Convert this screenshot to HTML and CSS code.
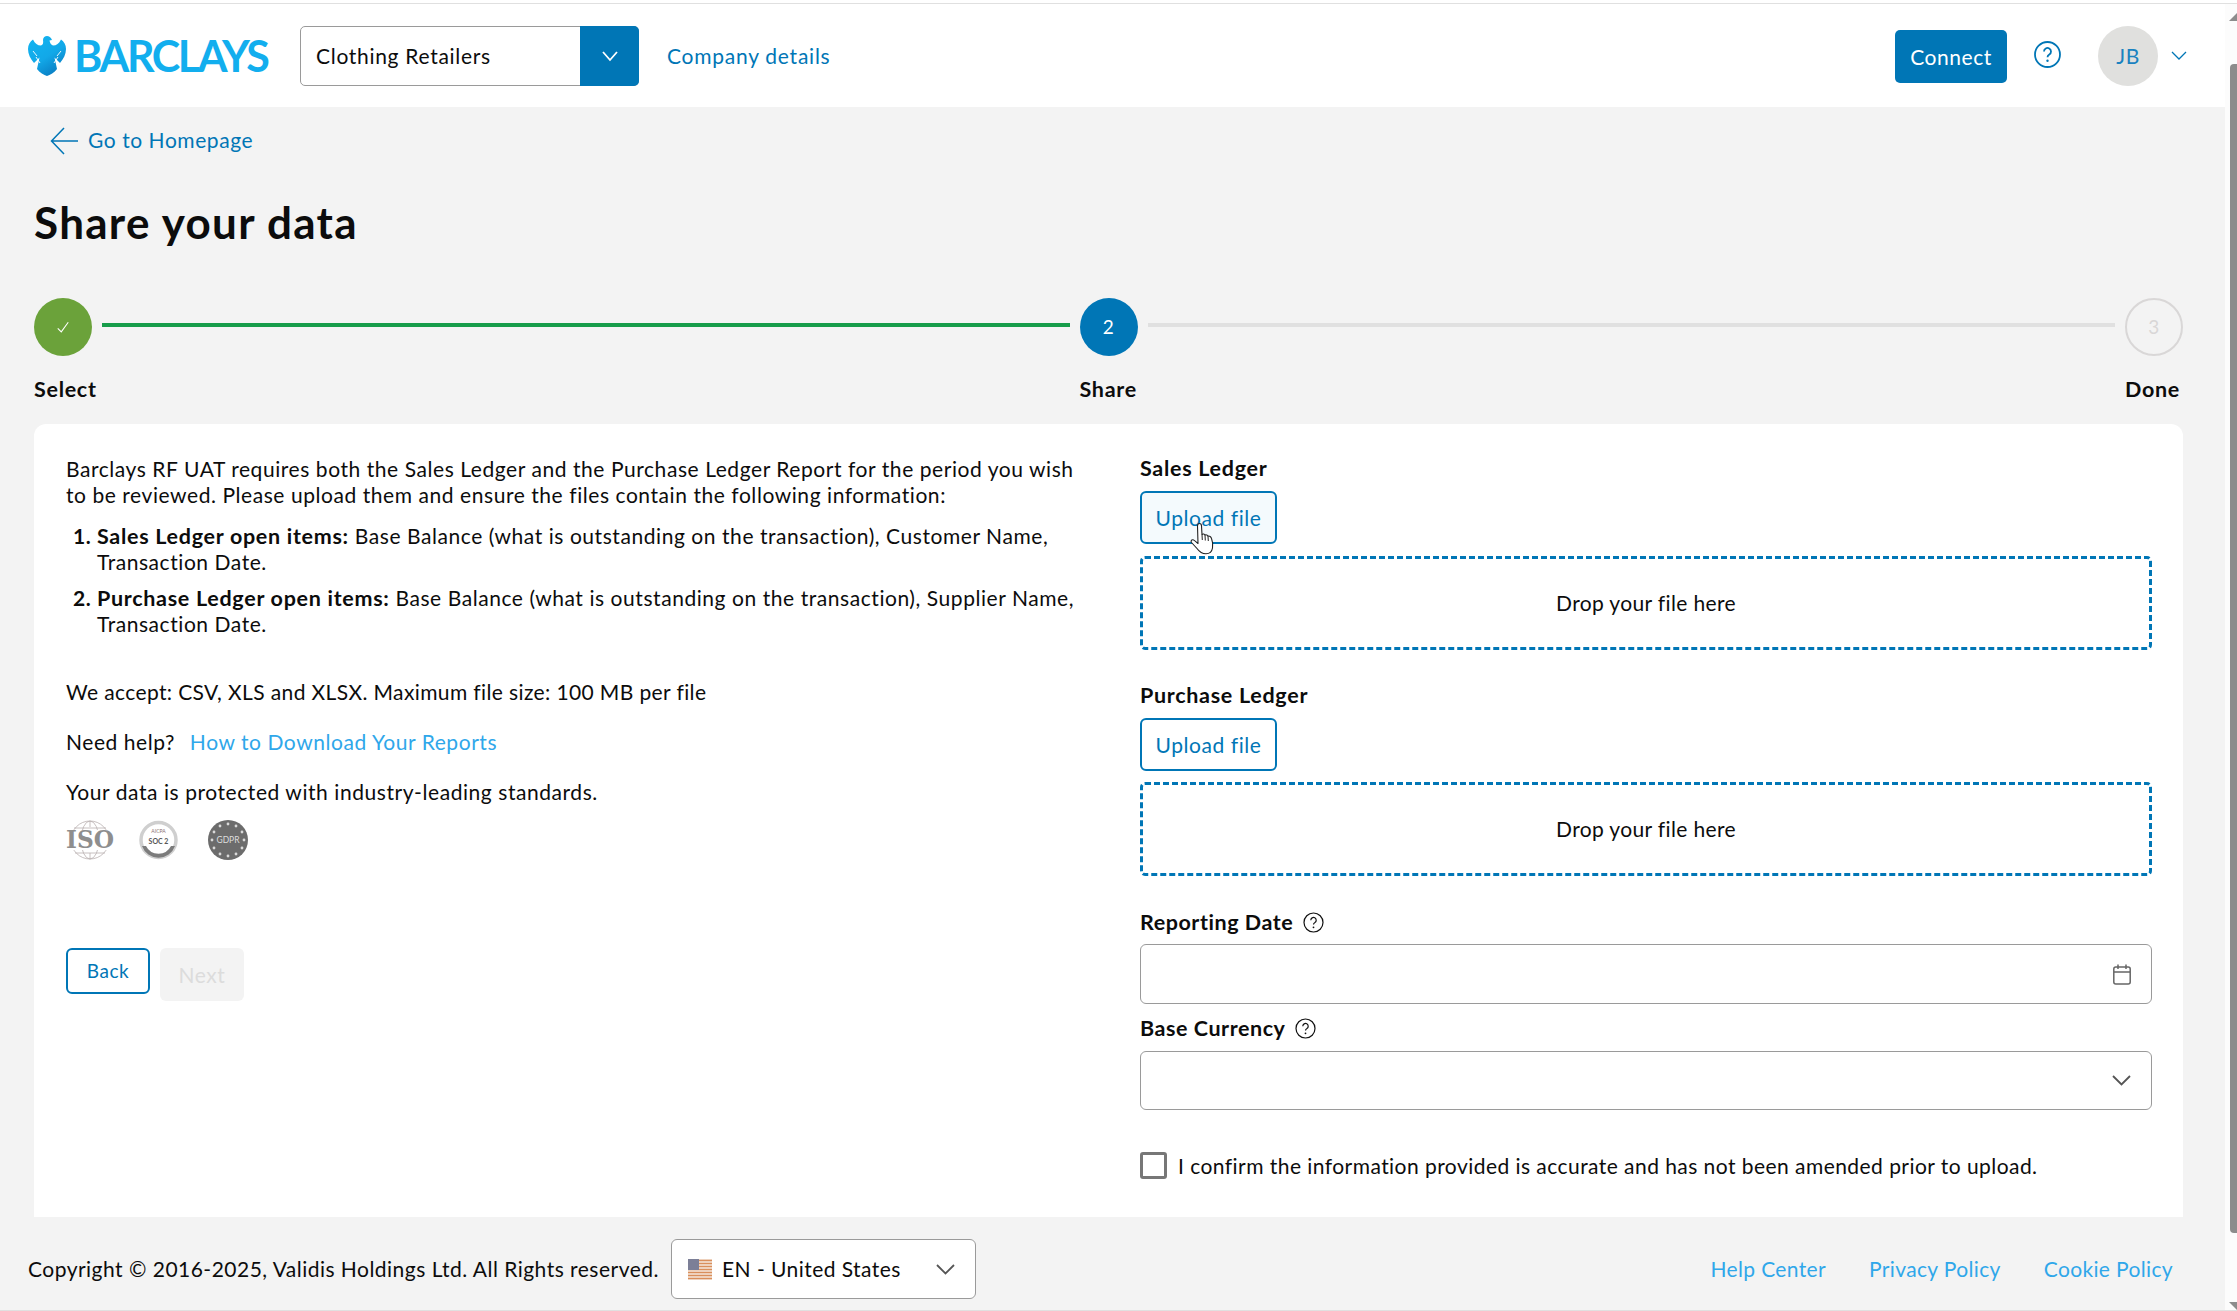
FILE: index.html
```html
<!DOCTYPE html>
<html lang="en">
<head>
<meta charset="utf-8">
<title>Share your data</title>
<link rel="stylesheet" href="styles.css">
</head>
<body>
<div class="shell">
  <div class="top-strip"></div>
  <div class="frame">
    <div class="app">
      <header class="header">
        <div class="logo">
          <svg class="eagle" viewBox="0 0 38 40" aria-hidden="true">
            <defs>
              <linearGradient id="eg" x1="0" y1="0" x2="0.6" y2="1">
                <stop offset="0" stop-color="#12b5f2"/>
                <stop offset="0.6" stop-color="#12a8e8"/>
                <stop offset="1" stop-color="#0a7fc4"/>
              </linearGradient>
            </defs>
            <path fill="url(#eg)" d="M19 0C21 0 23 1.500 24 4L21.500 4.500C22 7 23 9 25 9.500C28.500 9.500 31 7.500 33 3.500C36 5.500 38 9 38 13C38 18 35.500 23 32 27L26.500 21.500L29 33C26.500 36.500 22 39 19 40C16 39 11.500 36.500 9 33L11.500 21.500L6 27C2.500 23 0 18 0 13C0 9 2 5.500 5 3.500C7 7.500 9.500 9.500 13 9.500C15 9 15.500 7 15 4C15 1.500 17 0 19 0Z"/>
            <path fill="none" stroke="#fff" stroke-width="0.900" d="M8 21L12 27M30 21L26 27M5 15L9 20M33 15L29 20"/>
          </svg>
          <span class="wordmark">BARCLAYS</span>
        </div>
        <div class="company-select">
          <span class="company-name">Clothing Retailers</span>
          <span class="company-btn">
            <svg width="18" height="12" viewBox="0 0 18 12"><path d="M2 2l7 8 7-8" fill="none" stroke="#fff" stroke-width="1.800"/></svg>
          </span>
        </div>
        <a class="company-link">Company details</a>
        <div class="header-right">
          <button class="connect">Connect</button>
          <svg class="help" viewBox="0 0 27 27" aria-hidden="true">
            <circle cx="13.500" cy="13.500" r="12.500" fill="none" stroke="#0076b6" stroke-width="1.800"/>
            <path d="M10 10.500a3.500 3.500 0 1 1 5.300 3c-1.200.7-1.800 1.200-1.800 2.800" fill="none" stroke="#0076b6" stroke-width="1.800"/>
            <circle cx="13.500" cy="19.800" r="1.200" fill="#0076b6"/>
          </svg>
          <span class="avatar">JB</span>
          <svg class="avatar-chev" viewBox="0 0 16 9"><path d="M1 1l7 7 7-7" fill="none" stroke="#0076b6" stroke-width="1.300"/></svg>
        </div>
      </header>

      <main class="page">
        <a class="back-link">
          <svg width="28" height="28" viewBox="0 0 28 28"><path d="M14 1L1.500 14 14 27M1.500 14H28" fill="none" stroke="#0076b6" stroke-width="1.500"/></svg>
          <span class="back-text">Go to Homepage</span>
        </a>
        <h1 class="title">Share your data</h1>

        <div class="stepper">
          <div class="step">
            <span class="dot dot-done">
              <svg width="14" height="13" viewBox="0 0 16 14"><path d="M2 8l4 4 8-11" fill="none" stroke="#fff" stroke-width="1.200"/></svg>
            </span>
            <span class="step-label">Select</span>
          </div>
          <span class="connector connector-done"></span>
          <div class="step">
            <span class="dot dot-active">2</span>
            <span class="step-label">Share</span>
          </div>
          <span class="connector"></span>
          <div class="step">
            <span class="dot dot-todo">3</span>
            <span class="step-label">Done</span>
          </div>
        </div>

        <section class="card">
          <div class="left">
            <p>Barclays RF UAT requires both the Sales Ledger and the Purchase Ledger Report for the period you wish to be reviewed. Please upload them and ensure the files contain the following information:</p>
            <ol class="req-list">
              <li><b>Sales Ledger open items:</b> Base Balance (what is outstanding on the transaction), Customer Name, Transaction Date.</li>
              <li><b>Purchase Ledger open items:</b> Base Balance (what is outstanding on the transaction), Supplier Name, Transaction Date.</li>
            </ol>
            <p class="accept">We accept: CSV, XLS and XLSX. Maximum file size: 100 MB per file</p>
            <p class="gap">Need help? <a class="ext-link">How to Download Your Reports</a></p>
            <p class="gap">Your data is protected with industry-leading standards.</p>
            <div class="badges">
              <svg class="badge-iso" viewBox="0 0 48 40" aria-hidden="true">
                <g fill="none" stroke="#b9b0b0" stroke-width="0.800">
                  <circle cx="24" cy="20" r="19"/>
                  <ellipse cx="24" cy="20" rx="9" ry="19"/>
                  <path d="M8 8h32M5 13h38M5 28h38M9 33h30M24 1v6M24 33v6"/>
                </g>
                <rect x="0" y="10" width="48" height="20" fill="#fff"/>
                <text x="0" y="28" textLength="48" lengthAdjust="spacingAndGlyphs" class="iso-text">ISO</text>
              </svg>
              <svg class="badge-soc" viewBox="0 0 39 40" aria-hidden="true">
                <circle cx="19.500" cy="20" r="17.500" fill="#fff" stroke="#cfcfcf" stroke-width="3.500"/>
                <path d="M3 26a17.500 17.500 0 0 0 33 0l-4 0a14 14 0 0 1-25 0z" fill="#7c7c7c"/>
                <text x="19.500" y="13" text-anchor="middle" class="soc-small">AICPA</text>
                <text x="19.500" y="24" text-anchor="middle" class="soc-big">SOC 2</text>
              </svg>
              <svg class="badge-gdpr" viewBox="0 0 40 40" aria-hidden="true">
                <circle cx="20" cy="20" r="20" fill="#6c6c6c"/>
                <g fill="#d9d9d9">
                  <circle cx="20" cy="4" r="1.400"/><circle cx="28" cy="6" r="1.400"/><circle cx="34" cy="12" r="1.400"/><circle cx="36" cy="20" r="1.400"/><circle cx="34" cy="28" r="1.400"/><circle cx="28" cy="34" r="1.400"/><circle cx="20" cy="36" r="1.400"/><circle cx="12" cy="34" r="1.400"/><circle cx="6" cy="28" r="1.400"/><circle cx="4" cy="20" r="1.400"/><circle cx="6" cy="12" r="1.400"/><circle cx="12" cy="6" r="1.400"/>
                </g>
                <text x="20" y="23" text-anchor="middle" class="gdpr-text">GDPR</text>
              </svg>
            </div>
            <div class="nav-buttons">
              <button class="btn-back">Back</button>
              <button class="btn-next" disabled>Next</button>
            </div>
          </div>

          <div class="right">
            <label class="field-label">Sales Ledger</label>
            <div class="upload-row">
              <button class="upload upload-hover">Upload file</button>
              <svg class="hand" viewBox="0 0 25 33" aria-hidden="true">
                <path d="M9.500 1.500C11 1.500 11.500 2.500 11.500 4L12 12.500C13 11.500 14.500 12 15 13C16 12.500 17.500 13 18 14.200C19.500 13.700 21 14.800 21.500 16.500C22.500 19 23 23 22.500 26C22 29 20 31.800 16 31.800C12 31.800 9.500 30 7 26.500L1.500 20.500C0.500 19 1.500 17.500 3 17.800C4.500 18.200 6 20 8 21.500L7.500 4C7.500 2.500 8.300 1.500 9.500 1.500Z" fill="#fff" stroke="#222" stroke-width="1.100" stroke-linejoin="round"/>
                <path d="M12 12.500L12.300 18M15 13L15.300 18.500M18 14.200L18.300 19" fill="none" stroke="#222" stroke-width="1"/>
              </svg>
            </div>
            <div class="dropzone">Drop your file here</div>

            <label class="field-label field-label-next">Purchase Ledger</label>
            <div class="upload-row">
              <button class="upload">Upload file</button>
            </div>
            <div class="dropzone dropzone-second">Drop your file here</div>

            <label class="field-label field-label-date">Reporting Date
              <svg class="hint" viewBox="0 0 21 21" aria-hidden="true"><circle cx="10.500" cy="10.500" r="9.500" fill="none" stroke="#111" stroke-width="1.200"/><path d="M7.800 8.200a2.700 2.700 0 1 1 4.100 2.300c-.9.500-1.400 1-1.400 2.100" fill="none" stroke="#111" stroke-width="1.200"/><circle cx="10.500" cy="15.300" r="0.900" fill="#111"/></svg>
            </label>
            <div class="input">
              <svg class="cal" viewBox="0 0 18 21" aria-hidden="true"><rect x="0.800" y="3" width="16.400" height="17" rx="2" fill="none" stroke="#666" stroke-width="1.500"/><path d="M1 8h16M5 0.500v4.500M13 0.500v4.500" fill="none" stroke="#666" stroke-width="1.500"/></svg>
            </div>
            <label class="field-label field-label-currency">Base Currency
              <svg class="hint" viewBox="0 0 21 21" aria-hidden="true"><circle cx="10.500" cy="10.500" r="9.500" fill="none" stroke="#111" stroke-width="1.200"/><path d="M7.800 8.200a2.700 2.700 0 1 1 4.100 2.300c-.9.500-1.400 1-1.400 2.100" fill="none" stroke="#111" stroke-width="1.200"/><circle cx="10.500" cy="15.300" r="0.900" fill="#111"/></svg>
            </label>
            <div class="input input-select">
              <svg class="chev" viewBox="0 0 19 11" aria-hidden="true"><path d="M1 1l8.500 8.500L18 1" fill="none" stroke="#555" stroke-width="1.800"/></svg>
            </div>
            <div class="confirm">
              <span class="checkbox"></span>
              <span>I confirm the information provided is accurate and has not been amended prior to upload.</span>
            </div>
          </div>
        </section>

        <footer class="footer">
          <span class="copyright">Copyright © 2016-2025, Validis Holdings Ltd. All Rights reserved.</span>
          <div class="locale">
            <svg class="flag" viewBox="0 0 24 21" aria-hidden="true">
              <rect width="24" height="21" fill="#f4e7dc"/>
              <path d="M0 1.500h24M0 4.500h24M0 7.500h24M0 10.500h24M0 13.500h24M0 16.500h24M0 19.500h24" stroke="#d98f5c" stroke-width="1.500"/>
              <rect width="11" height="11" fill="#7c7f97"/>
            </svg>
            <span class="locale-text">EN - United States</span>
            <svg class="locale-chev" viewBox="0 0 19 11" aria-hidden="true"><path d="M1 1l8.500 8.500L18 1" fill="none" stroke="#555" stroke-width="1.800"/></svg>
          </div>
          <nav class="footer-links">
            <a>Help Center</a>
            <a>Privacy Policy</a>
            <a>Cookie Policy</a>
          </nav>
        </footer>
      </main>
    </div>
    <aside class="scrollbar">
      <span class="arrow-up"></span>
      <span class="thumb"></span>
      <span class="arrow-down"></span>
    </aside>
  </div>
  <div class="bottom-line"></div>
</div>
</body>
</html>
```
FILE: styles.css
```css
* { box-sizing: border-box; }
html, body { margin: 0; height: 100%; overflow: hidden; }
body {
  font-family: "Lato", "Open Sans", sans-serif;
  font-size: 21px;
  letter-spacing: 0.56px;
  line-height: 26px;
  color: #0c0c0c;
  background: #fff;
}
p { margin: 0; }
b { font-size: 21.500px; letter-spacing: 0.7px; }
button { font: inherit; letter-spacing: inherit; cursor: pointer; }
a { cursor: pointer; }

.shell { display: flex; flex-direction: column; height: 1311px; }
.top-strip { height: 4px; flex: none; background: #fff; border-bottom: 1px solid #e0e0e0; }
.frame { flex: 1; display: flex; min-height: 0; }
.bottom-line { height: 1px; flex: none; background: #e0e0e0; }
.app { flex: 1; display: flex; flex-direction: column; background: #f3f3f3; min-width: 0; }

.scrollbar { width: 12px; flex: none; background: #fcfcfc; display: flex; flex-direction: column; align-items: flex-end; }
.arrow-up { width: 8px; height: 8px; margin-top: 9px; background: #8c8c8c; clip-path: polygon(100% 0, 100% 100%, 0 100%); }
.thumb { width: 7px; height: 1169px; margin-top: 43px; background: #8c8c8c; border-radius: 4px 0 0 4px; }
.arrow-down { width: 8px; height: 8px; margin-top: auto; background: #8c8c8c; clip-path: polygon(0 0, 100% 0, 100% 100%); }

.header { height: 103px; flex: none; background: #fff; display: flex; align-items: center; padding: 0 38px 0 28px; }
.logo { display: flex; align-items: center; gap: 8px; width: 272px; flex: none; }
.eagle { width: 38px; height: 40px; flex: none; }
.wordmark { font-family: "Lato", sans-serif; font-size: 43px; font-weight: 700; letter-spacing: -2.400px; color: #12aeee; line-height: 40px; }
.company-select { display: flex; width: 339px; height: 60px; flex: none; border: 1px solid #9a9a9a; border-radius: 5px; background: #fff; }
.company-name { flex: 1; align-self: center; padding-left: 15px; letter-spacing: 0.7px; }
.company-btn { width: 59px; margin: -1px -1px -1px 0; background: #0076b6; border-radius: 0 5px 5px 0; display: flex; align-items: center; justify-content: center; }
.company-link { margin-left: 28px; color: #0076b6; letter-spacing: 0.75px; }
.header-right { margin-left: auto; display: flex; align-items: center; }
.connect { width: 112px; height: 53px; margin-top: 2px; background: #0076b6; color: #fff; border: 0; border-radius: 5px; padding: 0; }
.help { width: 27px; height: 27px; margin: -2px 0 0 27px; }
.avatar { width: 60px; height: 60px; margin-left: 37px; border-radius: 50%; background: #e0e0de; color: #1a82c0; display: flex; align-items: center; justify-content: center; }
.avatar-chev { width: 16px; height: 9px; margin-left: 13px; }

.page { flex: 1; display: flex; flex-direction: column; padding: 0 42px 0 34px; min-height: 0; }
.back-link { display: flex; align-items: center; gap: 10px; margin: 20px 0 0 16px; height: 28px; color: #0076b6; }
.back-text { padding-bottom: 2px; }
.title { margin: 42px 0 0; font-size: 44px; line-height: 50px; font-weight: 700; letter-spacing: 1.300px; color: #0c0c0c; }

.stepper { display: flex; align-items: flex-start; margin-top: 51px; }
.step { width: 58px; flex: none; display: flex; flex-direction: column; }
.dot { width: 58px; height: 58px; border-radius: 50%; display: flex; align-items: center; justify-content: center; font-size: 19px; }
.dot-done { background: #6ba23a; }
.dot-active { background: #0076b6; color: #fff; }
.dot-todo { border: 2px solid #d9d7d7; color: #d9d7d7; }
.step-label { margin-top: 20px; font-weight: 700; font-size: 21.500px; letter-spacing: 0.7px; white-space: nowrap; }
.connector { flex: 1; height: 4px; margin: 25px 10px 0; background: #e0e0e0; }
.connector-done { background: #179c4a; }

.card { margin-top: 22px; height: 793px; flex: none; background: #fff; border-radius: 12px 12px 0 0; padding: 32px 31px 0 32px; display: grid; grid-template-columns: 1fr 1012px; column-gap: 40px; }
.left { min-width: 0; }
.req-list { margin: 15px 0 0; padding-left: 31px; }
.req-list li + li { margin-top: 10px; }
.req-list li::marker { font-weight: 700; }
.accept { margin-top: 42px; letter-spacing: 0.38px; }
.gap { margin-top: 24px; }
.ext-link { color: #2fa7ea; margin-left: 9px; }
.badges { display: flex; align-items: center; margin-top: 15px; height: 40px; }
.badge-iso { width: 48px; height: 40px; }
.badge-soc { width: 39px; height: 40px; margin-left: 25px; }
.badge-gdpr { width: 40px; height: 40px; margin-left: 30px; }
.iso-text { font-family: "DejaVu Serif", serif; font-size: 24px; font-weight: 700; fill: #8e8e8e; letter-spacing: 0; }
.soc-small { font-family: "Lato", sans-serif; font-size: 5px; fill: #8a7070; letter-spacing: 0; }
.soc-big { font-family: "Lato", sans-serif; font-size: 7px; font-weight: 700; fill: #555; letter-spacing: 0; }
.gdpr-text { font-family: "Lato", sans-serif; font-size: 8.500px; fill: #ddd; letter-spacing: 0; }
.nav-buttons { display: flex; align-items: flex-start; gap: 10px; margin-top: 88px; }
.btn-back { width: 84px; height: 46px; font-size: 19px; background: #fff; color: #0076b6; border: 2px solid #0076b6; border-radius: 6px; padding: 0; }
.btn-next { width: 84px; height: 53px; background: #f3f3f3; color: #dcdcdc; border: 0; border-radius: 6px; padding: 0; cursor: default; }

.right { display: flex; flex-direction: column; align-items: stretch; min-width: 0; margin-top: -1px; }
.field-label { display: flex; align-items: center; font-weight: 700; font-size: 21.500px; letter-spacing: 0.7px; height: 26px; flex: none; }
.field-label-next { margin-top: 32px; }
.field-label-date { margin-top: 33px; letter-spacing: 0.55px; }
.field-label-currency { margin-top: 11px; letter-spacing: 0.55px; }
.hint { width: 21px; height: 21px; margin-left: 10px; }
.upload-row { position: relative; margin-top: 10px; flex: none; }
.upload { width: 137px; height: 53px; background: #fff; color: #0076b6; border: 2px solid #0076b6; border-radius: 6px; padding: 0; display: block; }
.upload-hover { background: #f4fafd; }
.hand { position: absolute; left: 50px; top: 31px; width: 25px; height: 33px; }
.dropzone { height: 94px; margin-top: 12px; flex: none; border: 3px dashed #0076b6; border-radius: 5px; display: flex; align-items: center; justify-content: center; padding-bottom: 1px; letter-spacing: 0.35px; }
.dropzone-second { margin-top: 11px; }
.input { height: 60px; margin-top: 9px; flex: none; border: 1px solid #9a9a9a; border-radius: 6px; background: #fff; display: flex; align-items: center; justify-content: flex-end; padding-right: 20px; }
.input-select { height: 59px; margin-top: 10px; }
.cal { width: 18px; height: 21px; }
.chev { width: 19px; height: 11px; }
.confirm { display: flex; align-items: center; margin-top: 42px; gap: 11px; letter-spacing: 0.45px; }
.checkbox { width: 27px; height: 27px; flex: none; border: 3px solid #777; border-radius: 3px; background: #fff; }

.footer { flex: 1; display: flex; align-items: center; padding-top: 11px; margin: 0 10px 0 -6px; }
.copyright { width: 637px; flex: none; white-space: nowrap; letter-spacing: 0.48px; }
.locale { display: flex; align-items: center; width: 305px; height: 60px; margin-left: 6px; padding: 0 20px 0 16px; border: 1px solid #9a9a9a; border-radius: 6px; background: #fff; flex: none; }
.flag { width: 24px; height: 21px; flex: none; }
.locale-text { margin-left: 10px; letter-spacing: 0.45px; }
.locale-chev { width: 19px; height: 11px; margin-left: auto; }
.footer-links { margin-left: auto; display: flex; gap: 43px; letter-spacing: 0.36px; }
.footer-links a { color: #2fa7ea; }
```
